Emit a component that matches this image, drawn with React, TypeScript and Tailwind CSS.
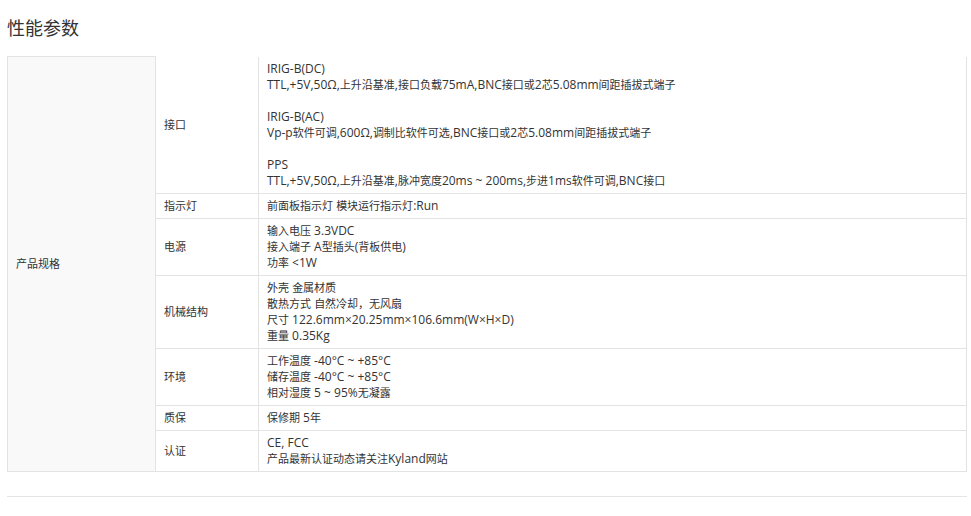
const specs: { name: string; lines: string[] }[] = [
  {
    name: "接口",
    lines: [
      "IRIG-B(DC)",
      "TTL,+5V,50Ω,上升沿基准,接口负载75mA,BNC接口或2芯5.08mm间距插拔式端子",
      "",
      "IRIG-B(AC)",
      "Vp-p软件可调,600Ω,调制比软件可选,BNC接口或2芯5.08mm间距插拔式端子",
      "",
      "PPS",
      "TTL,+5V,50Ω,上升沿基准,脉冲宽度20ms ~ 200ms,步进1ms软件可调,BNC接口",
    ],
  },
  { name: "指示灯", lines: ["前面板指示灯 模块运行指示灯:Run"] },
  { name: "电源", lines: ["输入电压 3.3VDC", "接入端子 A型插头(背板供电)", "功率 <1W"] },
  {
    name: "机械结构",
    lines: [
      "外壳 金属材质",
      "散热方式 自然冷却，无风扇",
      "尺寸 122.6mm×20.25mm×106.6mm(W×H×D)",
      "重量 0.35Kg",
    ],
  },
  {
    name: "环境",
    lines: ["工作温度 -40°C ~ +85°C", "储存温度 -40°C ~ +85°C", "相对湿度 5 ~ 95%无凝露"],
  },
  { name: "质保", lines: ["保修期 5年"] },
  { name: "认证", lines: ["CE, FCC", "产品最新认证动态请关注Kyland网站"] },
];

// CJK runs render a size smaller than the latin text, like the original page
function Mixed({ text }: { text: string }) {
  const parts = text.split(/([\u2E80-\u9FFF\u3000-\u303F\uFF00-\uFFEF]+)/);
  return (
    <>
      {parts.map((p, i) =>
        i % 2 === 1 ? (
          <span key={i} className="text-[11px]">
            {p}
          </span>
        ) : (
          p
        ),
      )}
    </>
  );
}

export default function App() {
  return (
    <div
      className="min-h-screen bg-white px-[7px] pt-[14px] text-[#333]"
      style={{ fontFamily: '"Open Sans", "Noto Sans CJK SC", sans-serif' }}
    >
      <h2 className="text-[18px] leading-[28px] font-normal text-[#333]">性能参数</h2>
      <table className="mt-[14px] w-[960px] border-collapse text-[12px] leading-4">
        <tbody>
          {specs.map((s, i) => (
            <tr key={s.name}>
              {i === 0 && (
                <td
                  rowSpan={specs.length}
                  className="w-[148px] border border-[#e3e3e3] bg-[#f9f9f9] px-2 align-middle"
                >
                  <Mixed text="产品规格" />
                </td>
              )}
              <td
                className={`w-[103px] border-b border-l border-[#e3e3e3] px-2 align-middle ${
                  i === 0 ? "border-t-0" : "border-t"
                }`}
              >
                <Mixed text={s.name} />
              </td>
              <td
                className={`border-b border-l border-r border-[#e3e3e3] px-2 py-1 align-top ${
                  i === 0 ? "border-t-0" : "border-t"
                }`}
              >
                {s.lines.map((l, j) => (
                  <div key={j} className="h-4 whitespace-nowrap">
                    <Mixed text={l} />
                  </div>
                ))}
              </td>
            </tr>
          ))}
        </tbody>
      </table>
      <div className="mt-[24px] w-[960px] border-t border-[#e5e5e5]" />
    </div>
  );
}
